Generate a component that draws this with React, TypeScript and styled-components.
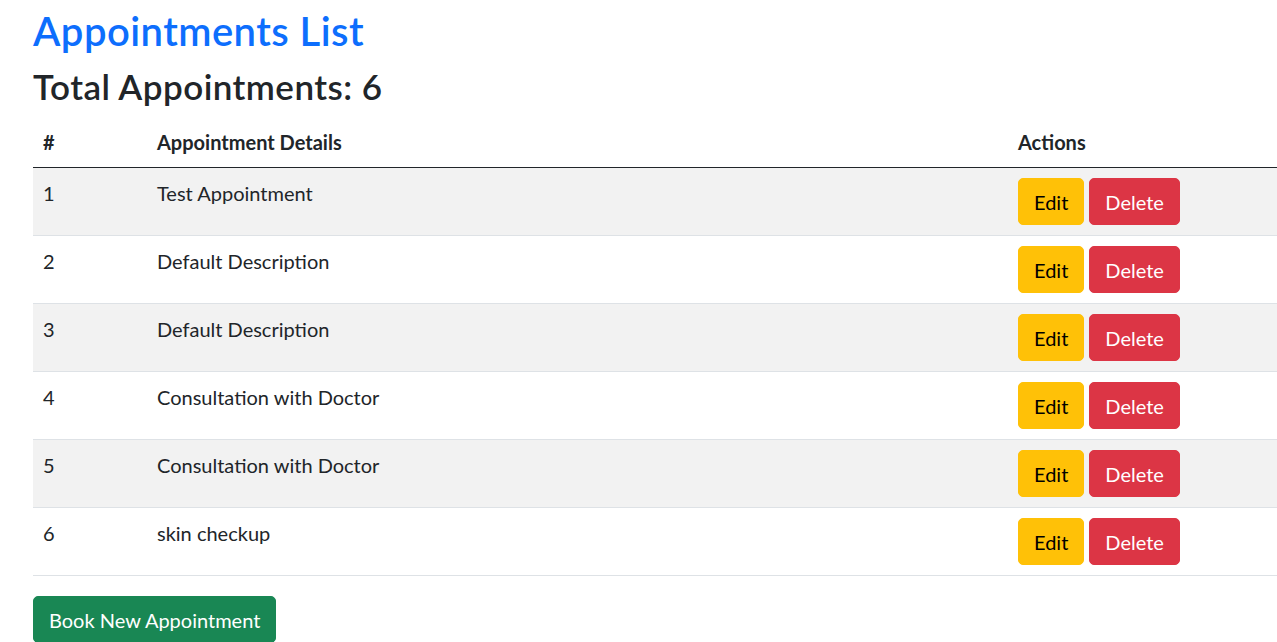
import React from "react";
import styled, { createGlobalStyle } from "styled-components";

const GlobalStyle = createGlobalStyle`
  html, body {
    margin: 0;
    padding: 0;
    background: #ffffff;
  }
  body {
    font-family: Lato, "Noto Sans", sans-serif;
    font-size: 20px;
    line-height: 30px;
    color: #212529;
    overflow: hidden;
  }
  * { box-sizing: border-box; }
`;

const Page = styled.div`
  padding: 7px 0 0 33px;
  display: flex;
  flex-direction: column;
  align-items: flex-start;
`;

const Title = styled.h2`
  margin: 0 0 10px;
  font-size: 40px;
  line-height: 48px;
  font-weight: 600;
  letter-spacing: 0.45px;
  color: #0d6efd;
`;

const Subtitle = styled.h3`
  margin: 0 0 10px;
  font-size: 35px;
  line-height: 42px;
  font-weight: 600;
  letter-spacing: 0.45px;
  color: #212529;
`;

const Table = styled.table`
  width: 100%;
  border-collapse: collapse;
  margin-bottom: 20px;
  table-layout: fixed;
`;

const HeadCell = styled.th<{ $w: number }>`
  width: ${(p) => p.$w}px;
  text-align: left;
  font-weight: 700;
  padding: 10px;
  vertical-align: bottom;
  border-bottom: 1px solid #212529;
`;

const Row = styled.tr<{ $striped: boolean }>`
  background: ${(p) => (p.$striped ? "#f2f2f2" : "#ffffff")};
  border-bottom: 1px solid #dee2e6;
`;

const Cell = styled.td`
  padding: 10px;
  vertical-align: top;
  height: 67px;
`;

const Actions = styled.div`
  display: flex;
  gap: 5px;
`;

const Button = styled.button<{ $variant: "warning" | "danger" | "success" }>`
  font-family: inherit;
  font-size: 20px;
  line-height: 30px;
  padding: 7.5px 15px;
  border-radius: 5px;
  cursor: pointer;
  border: 1px solid
    ${(p) =>
      p.$variant === "warning" ? "#ffc107" : p.$variant === "danger" ? "#dc3545" : "#198754"};
  background: ${(p) =>
    p.$variant === "warning" ? "#ffc107" : p.$variant === "danger" ? "#dc3545" : "#198754"};
  color: ${(p) => (p.$variant === "warning" ? "#000000" : "#ffffff")};
`;

const appointments = [
  "Test Appointment",
  "Default Description",
  "Default Description",
  "Consultation with Doctor",
  "Consultation with Doctor",
  "skin checkup",
];

export default function App() {
  return (
    <>
      <GlobalStyle />
      <Page>
        <Title>Appointments List</Title>
        <Subtitle>Total Appointments: {appointments.length}</Subtitle>
        <Table>
          <thead>
            <tr>
              <HeadCell $w={114}>#</HeadCell>
              <HeadCell $w={861}>Appointment Details</HeadCell>
              <HeadCell $w={269}>Actions</HeadCell>
            </tr>
          </thead>
          <tbody>
            {appointments.map((a, i) => (
              <Row key={i} $striped={i % 2 === 0}>
                <Cell>{i + 1}</Cell>
                <Cell>{a}</Cell>
                <Cell>
                  <Actions>
                    <Button $variant="warning">Edit</Button>
                    <Button $variant="danger">Delete</Button>
                  </Actions>
                </Cell>
              </Row>
            ))}
          </tbody>
        </Table>
        <Button $variant="success">Book New Appointment</Button>
      </Page>
    </>
  );
}
